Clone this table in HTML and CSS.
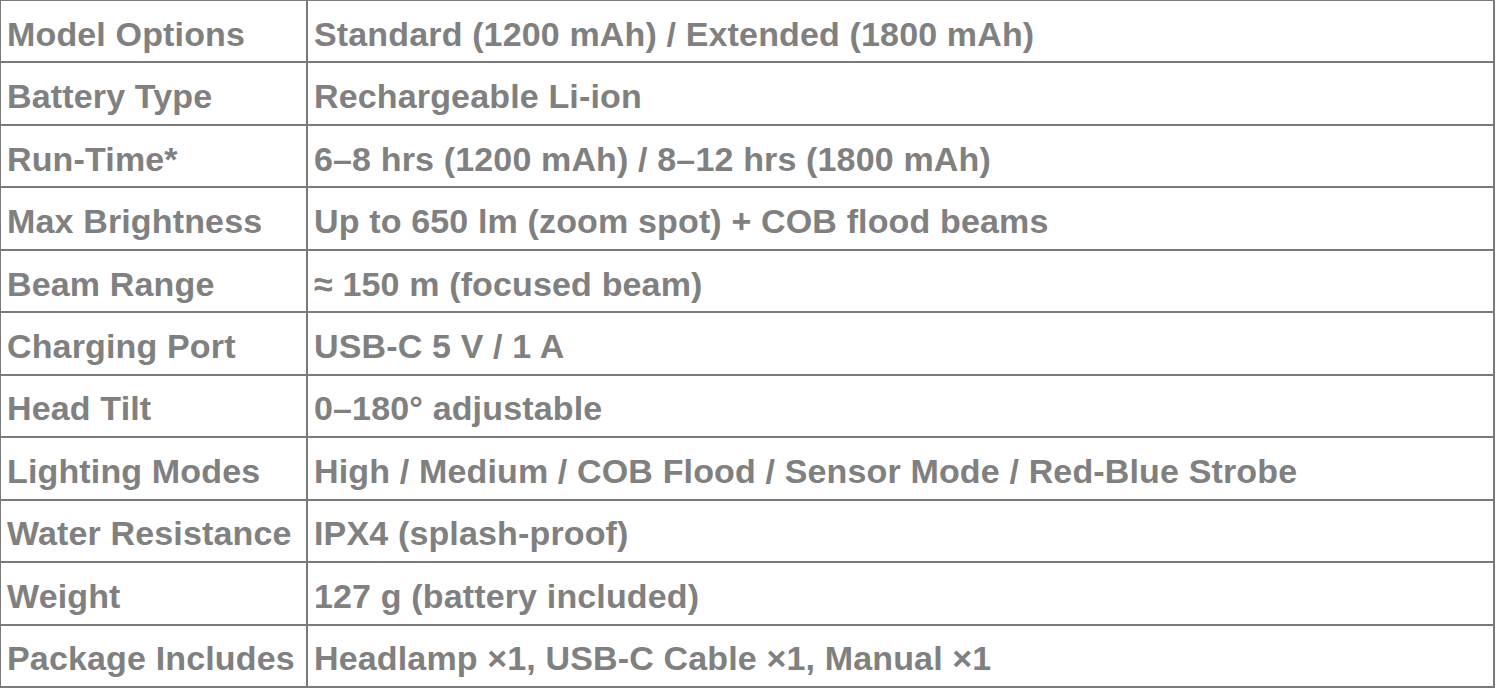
FILE: index.html
```html
<!DOCTYPE html>
<html>
<head>
<meta charset="utf-8">
<link rel="stylesheet" href="styles.css">
</head>
<body>
<table class="specs">
<tr><td class="k">Model Options</td><td class="v">Standard (1200 mAh) / Extended (1800 mAh)</td></tr>
<tr><td class="k">Battery Type</td><td class="v">Rechargeable Li-ion</td></tr>
<tr><td class="k">Run-Time*</td><td class="v">6–8 hrs (1200 mAh) / 8–12 hrs (1800 mAh)</td></tr>
<tr><td class="k">Max Brightness</td><td class="v">Up to 650 lm (zoom spot) + COB flood beams</td></tr>
<tr><td class="k">Beam Range</td><td class="v">≈ 150 m (focused beam)</td></tr>
<tr><td class="k">Charging Port</td><td class="v">USB-C 5 V / 1 A</td></tr>
<tr><td class="k">Head Tilt</td><td class="v">0–180° adjustable</td></tr>
<tr><td class="k">Lighting Modes</td><td class="v">High / Medium / COB Flood / Sensor Mode / Red-Blue Strobe</td></tr>
<tr><td class="k">Water Resistance</td><td class="v">IPX4 (splash-proof)</td></tr>
<tr><td class="k">Weight</td><td class="v">127 g (battery included)</td></tr>
<tr><td class="k">Package Includes</td><td class="v">Headlamp ×1, USB-C Cable ×1, Manual ×1</td></tr>
</table>
</body>
</html>
```
FILE: styles.css
```css
html, body {
  margin: 0;
  padding: 0;
  background: #ffffff;
  overflow: hidden;
}
.specs {
  border-collapse: collapse;
  margin: -1px 0 0 -1px;
  width: 1496px;
  height: 689px;
  font-family: "Liberation Sans", Arial, sans-serif;
  font-weight: bold;
  font-size: 34px;
  letter-spacing: 0.15px;
  color: #808080;
}
.specs td {
  border: 2px solid #7a7a7a;
  padding: 5px 0 0 6px;
  text-align: left;
  vertical-align: middle;
  white-space: nowrap;
  line-height: 1;
}
.specs .k {
  width: 299px;
}
```
